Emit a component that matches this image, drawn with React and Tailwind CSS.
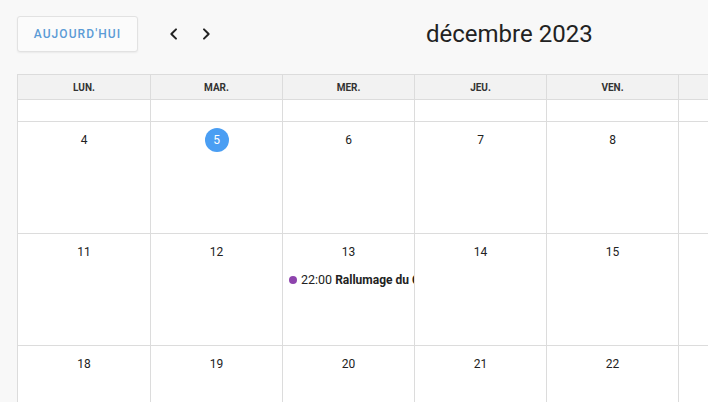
import React from 'react'

const days = ['LUN.', 'MAR.', 'MER.', 'JEU.', 'VEN.', '']

const weeks = [
  [4, 5, 6, 7, 8, null],
  [11, 12, 13, 14, 15, null],
  [18, 19, 20, 21, 22, null],
]

function Chevron({ dir }) {
  return (
    <svg width="16" height="16" viewBox="0 0 24 24" fill="none" stroke="#222" strokeWidth="3" strokeLinecap="round" strokeLinejoin="round">
      {dir === 'left' ? <path d="M15 5l-7 7 7 7" /> : <path d="M9 5l7 7-7 7" />}
    </svg>
  )
}

const cols = 'grid grid-cols-[133px_repeat(5,132px)]'

export default function App() {
  return (
    <div className="w-[708px] h-[402px] overflow-hidden bg-[#f8f8f8] font-['Roboto',sans-serif] text-[#333]">
      {/* barre d'outils */}
      <div className="flex items-center pl-[17px] pt-[16px] h-[52px]">
        <button className="w-[121px] h-[36px] rounded-[3px] border border-[#e2e2e2] bg-[#fbfbfb] shadow-[0_1px_2px_rgba(0,0,0,0.06)] text-[12px] font-medium tracking-[0.09em] text-[#5b9bd6]">
          AUJOURD'HUI
        </button>
        <div className="flex items-center ml-[28px] gap-[16px]">
          <Chevron dir="left" />
          <Chevron dir="right" />
        </div>
        <div className="ml-[212px] text-[24px] text-[#222] leading-none">décembre 2023</div>
      </div>

      {/* calendrier */}
      <div className="ml-[17px] mt-[22px] w-[793px] border-l border-t border-[#dcdcdc] bg-white">
        <div className={`${cols} bg-[#f2f2f2]`}>
          {days.map((d, i) => (
            <div key={i} className="h-[25px] border-r border-b border-[#dcdcdc] flex items-center justify-center text-[10px] font-bold text-[#333]">
              {d}
            </div>
          ))}
        </div>
        <div className={cols}>
          {days.map((d, i) => (
            <div key={i} className="h-[22px] border-r border-b border-[#dcdcdc]" />
          ))}
        </div>
        {weeks.map((week, wi) => (
          <div key={wi} className={cols}>
            {week.map((n, i) => (
              <div key={i} className="h-[112px] border-r border-b border-[#dcdcdc] overflow-hidden">
                {n !== null && (
                  <div className="flex justify-center pt-[6px]">
                    <div className={`w-[24px] h-[24px] rounded-full flex items-center justify-center text-[12px] ${n === 5 ? 'bg-[#4a9ef3] text-white' : 'text-[#222]'}`}>
                      {n}
                    </div>
                  </div>
                )}
                {n === 13 && (
                  <div className="flex items-center mt-[7px] pl-[6px] whitespace-nowrap text-[12.5px] text-[#222]">
                    <span className="w-[8px] h-[8px] rounded-full bg-[#8e44ad] mr-[4px] shrink-0" />
                    <span>22:00</span>
                    <span className="ml-[3px] text-[12px] font-bold">Rallumage du Cierge</span>
                  </div>
                )}
              </div>
            ))}
          </div>
        ))}
      </div>
    </div>
  )
}
